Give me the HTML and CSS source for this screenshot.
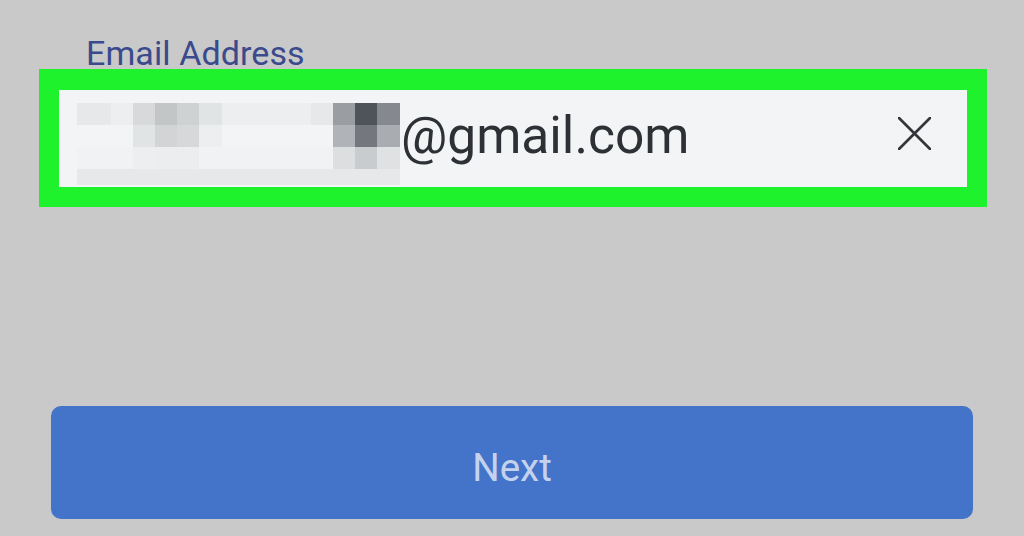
FILE: index.html
```html
<!DOCTYPE html>
<html lang="en">
<head>
<meta charset="utf-8">
<title>Email Address</title>
<link rel="stylesheet" href="styles.css">
</head>
<body>
<main class="screen">
  <label class="label" for="email">Email Address</label>
  <div class="field">
    <div class="mosaic" aria-hidden="true">
      <i class="c2"></i><i class="c1"></i><i class="c4"></i><i class="c6"></i><i class="c5"></i><i class="c3"></i><i class="c1"></i><i class="c1"></i><i class="c1"></i><i class="c1"></i><i class="c2"></i><i class="c8"></i><i class="c11"></i><i class="c9"></i>
      <i class="c0"></i><i class="c0"></i><i class="c3"></i><i class="c5b"></i><i class="c5c"></i><i class="c1"></i><i class="c0"></i><i class="c0"></i><i class="c0"></i><i class="c0"></i><i class="c0"></i><i class="c7"></i><i class="c10"></i><i class="c7b"></i>
      <i class="c0b"></i><i class="c0b"></i><i class="c1"></i><i class="c1b"></i><i class="c1b"></i><i class="c0b"></i><i class="c0b"></i><i class="c0b"></i><i class="c0b"></i><i class="c0b"></i><i class="c0b"></i><i class="c4b"></i><i class="c5d"></i><i class="c4c"></i>
      <i class="strip"></i>
    </div>
    <span class="domain" id="email">@gmail.com</span>
    <svg class="clear" viewBox="0 0 33 33" width="33" height="33" aria-label="Clear">
      <path d="M1 1 L32 32 M32 1 L1 32" stroke="#333539" stroke-width="2.7" stroke-linecap="round" fill="none"/>
    </svg>
  </div>
  <button class="next" type="button">Next</button>
</main>
</body>
</html>
```
FILE: styles.css
```css
* { box-sizing: border-box; }
html, body {
  margin: 0;
  padding: 0;
  width: 1024px;
  height: 536px;
  overflow: hidden;
  background: #c9c9c9;
}
.screen {
  display: flex;
  flex-direction: column;
  align-items: flex-start;
  padding: 37px 0 0 39px;
  font-family: Roboto, "Noto Sans", "Liberation Sans", sans-serif;
}
.label {
  display: block;
  padding-left: 47px;
  font-size: 34px;
  line-height: 32px;
  color: #3a4a8c;
  letter-spacing: 0.1px;
}
.field {
  display: flex;
  align-items: flex-start;
  width: 948px;
  height: 138px;
  border: 20px solid #1df22d;
  border-top-width: 21px;
  background: #f2f4f5;
  padding-left: 18px;
}
.mosaic {
  display: grid;
  grid-template-columns: 34px 22px 22px 22px 22px 23px 22px 22px 23px 22px 22px 22px 22px 23px;
  grid-template-rows: 22px 22px 22px 16px;
  margin-top: 13px;
}
.mosaic i { display: block; }
.mosaic .strip { grid-column: 1 / -1; background: #e6e8e9; }
.c0 { background: #f2f4f5; }
.c0b { background: #f0f2f3; }
.c1 { background: #eceeef; }
.c1b { background: #ebedee; }
.c2 { background: #e6e8e9; }
.c3 { background: #e1e4e5; }
.c4 { background: #d7d9da; }
.c4b { background: #dcdee0; }
.c4c { background: #dfe1e2; }
.c5 { background: #cfd2d3; }
.c5b { background: #d2d4d5; }
.c5c { background: #d6d8d9; }
.c5d { background: #c9ccce; }
.c6 { background: #c3c6c7; }
.c7 { background: #b0b3b7; }
.c7b { background: #a9acb0; }
.c8 { background: #9a9da2; }
.c9 { background: #85898f; }
.c10 { background: #74787e; }
.c11 { background: #4f545b; }
.domain {
  margin-top: 16px;
  margin-left: 1px;
  font-size: 51.5px;
  line-height: 60px;
  color: #2d3136;
}
.clear {
  display: block;
  margin-left: auto;
  margin-right: 36px;
  margin-top: 27px;
}
.next {
  display: flex;
  align-items: center;
  justify-content: center;
  margin: 199px 0 0 12px;
  width: 922px;
  height: 113px;
  padding: 9px 0 0 0;
  border: none;
  border-radius: 10px;
  background: #4374ca;
  color: #c5d2ee;
  font-family: Roboto, "Noto Sans", "Liberation Sans", sans-serif;
  font-size: 38.5px;
}
```
